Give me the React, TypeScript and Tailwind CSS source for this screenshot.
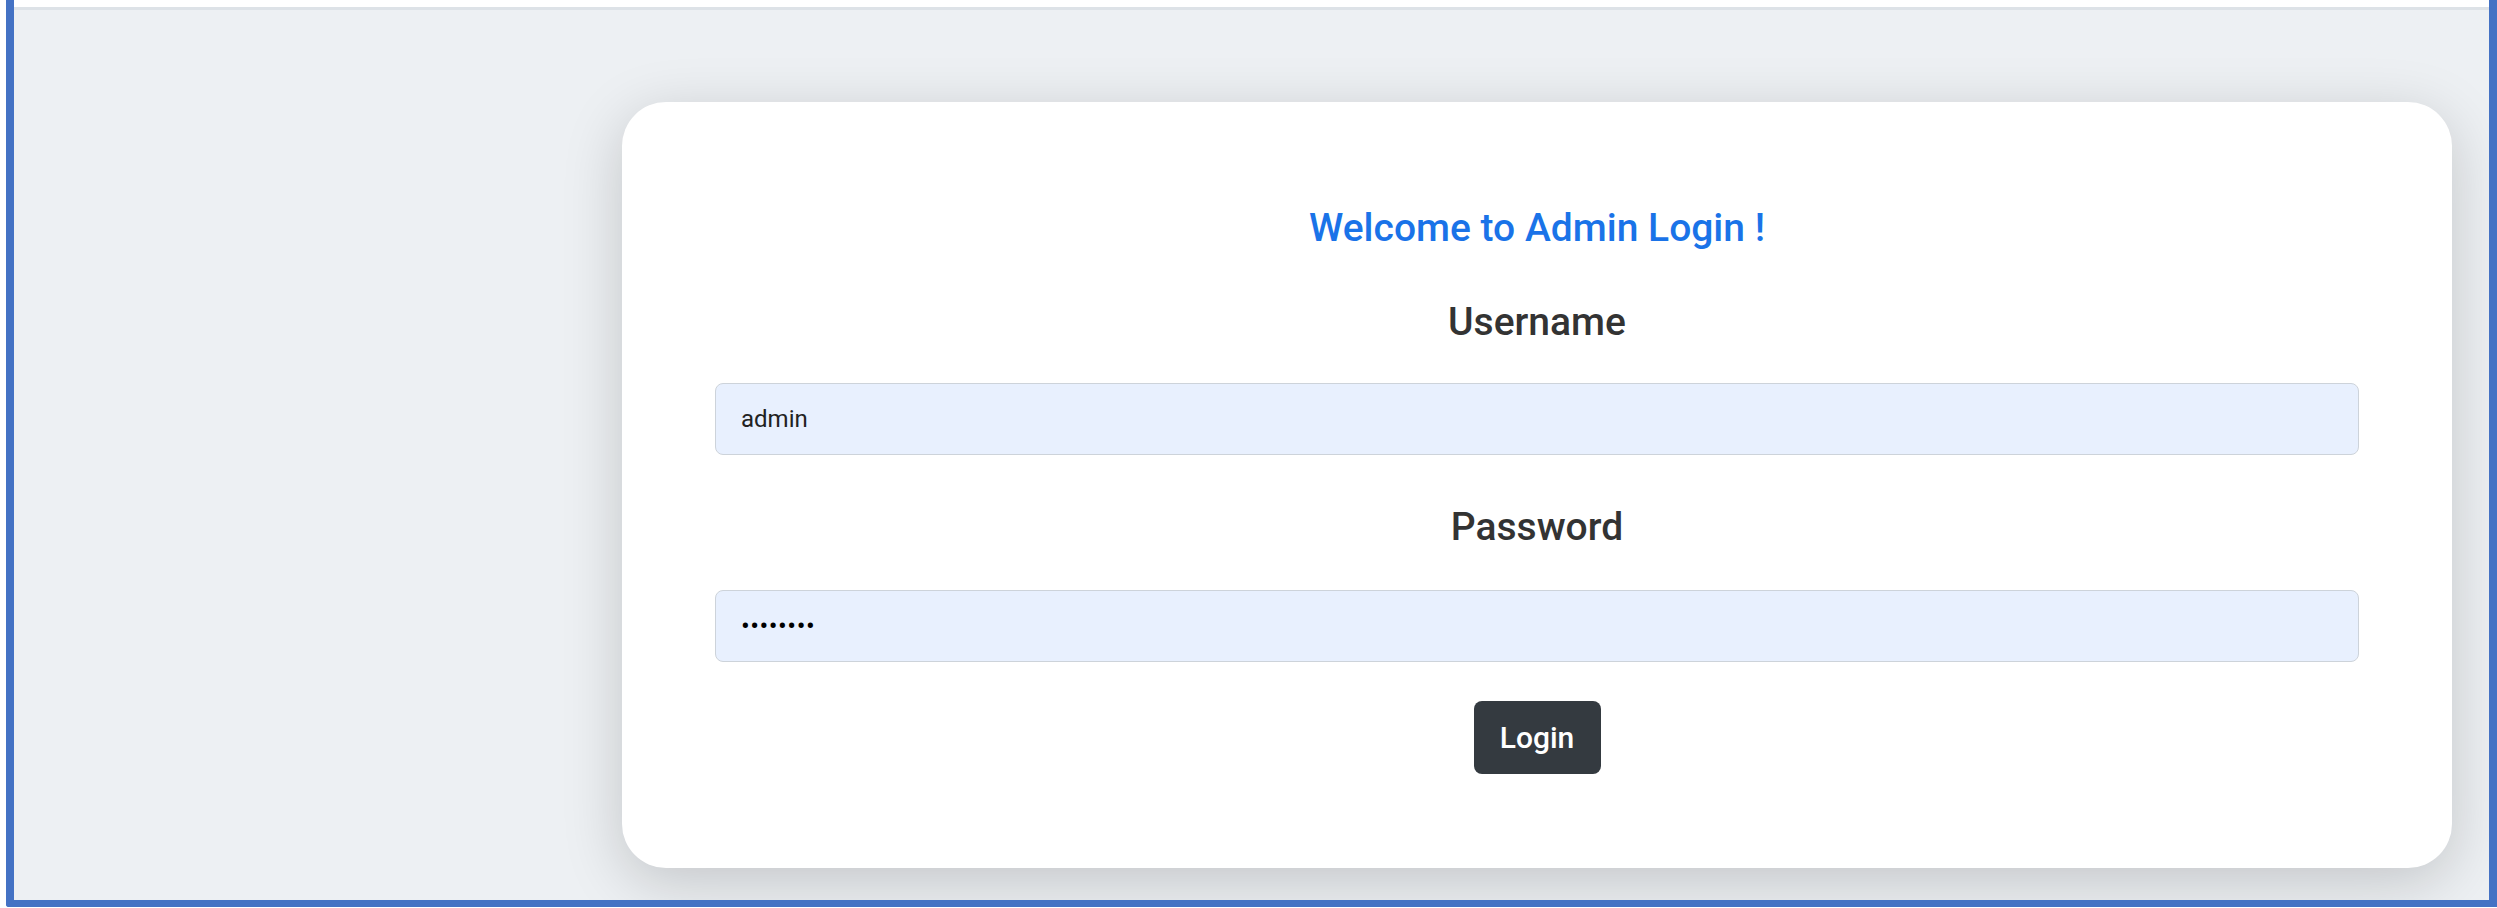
import React from 'react';

export default function App() {
  return (
    <div className="w-full h-[908px] bg-white pl-[6px] font-['Roboto',sans-serif]">
      <div className="h-[907px] flex flex-col border-l-8 border-r-8 border-b-[7px] border-[#4472c4] rounded-bl-[3px] overflow-hidden">
        <div className="h-[10px] shrink-0 bg-white border-b-[3px] border-[#dde2e7]" />
        <div className="flex-1 bg-[#edf0f3] pt-[92px] pl-[608px] pr-[37px]">
          <div className="bg-white rounded-[44px] shadow-[0_14px_60px_rgba(0,0,0,0.18)] pt-[103px] pb-[94px] px-[93px] flex flex-col items-center">
            <h4 className="text-[39px] leading-[46px] font-medium text-[#1a73e8]">Welcome to Admin Login !</h4>
            <label className="mt-[49px] text-[39px] leading-[44px] font-medium text-[#333]">Username</label>
            <input
              type="text"
              value="admin"
              readOnly
              className="mt-[39px] w-full h-[72px] px-[25px] bg-[#e8f0fe] border-[1.5px] border-[#cdd3da] rounded-[8px] text-[24px] text-[#222] outline-none"
            />
            <label className="mt-[50px] text-[39px] leading-[44px] font-medium text-[#333]">Password</label>
            <input
              type="password"
              value="password"
              readOnly
              className="mt-[41px] w-full h-[72px] px-[25px] bg-[#e8f0fe] border-[1.5px] border-[#cdd3da] rounded-[8px] text-[26px] tracking-[0.5px] text-black outline-none"
            />
            <button
              type="button"
              className="mt-[39px] w-[127px] h-[73px] rounded-[8px] bg-[#343a40] text-white text-[30px] font-medium"
            >
              Login
            </button>
          </div>
        </div>
      </div>
    </div>
  );
}
